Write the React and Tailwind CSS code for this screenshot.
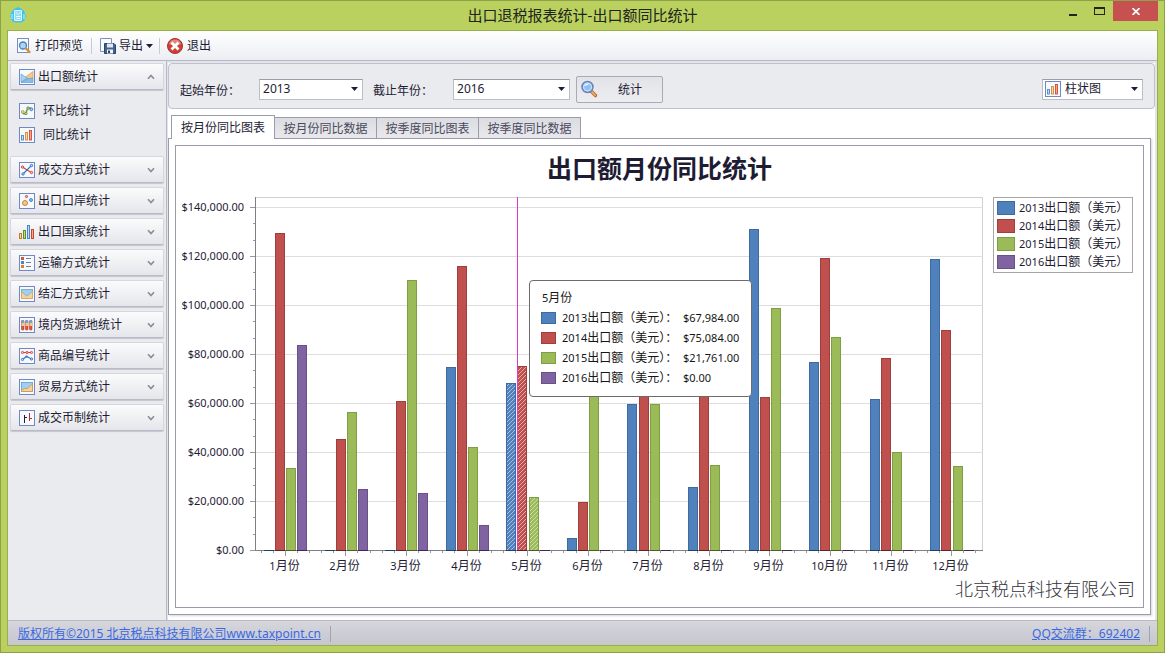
import React, { useState } from "react";

const SERIES = [
  { year: "2013", fill: "#4f81bd", edge: "#3f6a9e", tip: "$67,984.00" },
  { year: "2014", fill: "#c0504d", edge: "#9f3f3d", tip: "$75,084.00" },
  { year: "2015", fill: "#9bbb59", edge: "#7f9d43", tip: "$21,761.00" },
  { year: "2016", fill: "#8064a2", edge: "#695087", tip: "$0.00" },
];

const MONTHS = [
  [0, 129390, 33470, 83670],
  [0, 45310, 56330, 24900],
  [0, 60820, 110200, 23270],
  [74690, 115920, 42040, 10200],
  [67984, 75084, 21761, 0],
  [4900, 19600, 81600, 0],
  [59600, 73500, 59600, 0],
  [25710, 71400, 34690, 0],
  [131020, 62450, 98780, 0],
  [76730, 119180, 86940, 0],
  [61630, 78370, 40000, 0],
  [118780, 89800, 34290, 0],
];

const CHART = { w: 809, h: 380, left: 79, right: 807, base: 353 };
const UNIT = 49 / 20000;
const SLOT = 60.58;

function Glyph({ name, className = "" }) {
  return (
    <svg viewBox="0 0 16 16" className={`size-4 shrink-0 ${className}`} aria-hidden="true">
      {name !== "country" && name !== "page" && (
        <rect x="0.5" y="0.5" width="15" height="15" fill="#f6f9fe" stroke="#7088c4" />
      )}
      {name === "area" && (
        <>
          <path d="M2 5 L8 9 L14 7 V13.500 H2Z" fill="#a9d3f2" />
          <path d="M6.500 8 L14 2.500 V9 L9.500 9.500Z" fill="#f5c88b" stroke="#d99a4c" strokeWidth="0.7" />
          <path d="M2 5 L8 9 L2 13Z" fill="#a9d3f2" stroke="#5c9bd0" strokeWidth="0.6" />
          <path d="M2 13.500 L8 10 L14 9 V13.500Z" fill="#86bde6" stroke="#5c9bd0" strokeWidth="0.6" />
        </>
      )}
      {name === "wave" && (
        <>
          <path d="M3.500 9.500 C5 12 7 11 7.500 8.500 S10 3.500 12.500 6" fill="none" stroke="#6b9a3a" strokeWidth="1.500" />
          <circle cx="3.800" cy="9" r="1.400" fill="#f5e6a2" stroke="#a68a35" strokeWidth="0.8" />
          <circle cx="7" cy="10.500" r="1.200" fill="#cde39f" stroke="#5e8a30" strokeWidth="0.8" />
          <circle cx="9" cy="5" r="1.200" fill="#cde39f" stroke="#5e8a30" strokeWidth="0.8" />
          <circle cx="12.300" cy="6.300" r="1.400" fill="#b6d5f5" stroke="#3c6fae" strokeWidth="0.9" />
        </>
      )}
      {name === "bars" && (
        <>
          <rect x="2.500" y="8.500" width="2" height="4.500" fill="#b9dcf8" stroke="#4a8ccf" strokeWidth="0.9" />
          <rect x="6.500" y="5.500" width="2" height="7.500" fill="#fbd8a6" stroke="#cf8b3e" strokeWidth="0.9" />
          <rect x="10.500" y="3.500" width="2" height="9.500" fill="#f9a48c" stroke="#d04a34" strokeWidth="0.9" />
        </>
      )}
      {name === "deal" && (
        <>
          <path d="M3.500 5 L8 8 L12.500 10.500" stroke="#d6403a" strokeWidth="1.100" fill="none" />
          <path d="M4 12 L8 8 L12.500 3.500" stroke="#3373c0" strokeWidth="1.100" fill="none" />
          <circle cx="3.500" cy="5" r="1.200" fill="#fbb" stroke="#d6403a" strokeWidth="0.9" />
          <circle cx="12.500" cy="10.500" r="1.200" fill="#fbb" stroke="#d6403a" strokeWidth="0.9" />
          <circle cx="4" cy="12" r="1.200" fill="#bdf" stroke="#3373c0" strokeWidth="0.9" />
          <circle cx="12.500" cy="3.500" r="1.200" fill="#bdf" stroke="#3373c0" strokeWidth="0.9" />
        </>
      )}
      {name === "port" && (
        <>
          <circle cx="6" cy="10" r="2.500" fill="#f6c58a" stroke="#c47a28" strokeWidth="0.9" />
          <circle cx="12" cy="7" r="1.500" fill="#8cc2f0" stroke="#3c7cc0" strokeWidth="0.9" />
          <circle cx="7.500" cy="3.500" r="1.100" fill="#f5a79a" stroke="#cc3e30" strokeWidth="0.9" />
        </>
      )}
      {name === "country" && (
        <>
          <rect x="0.5" y="9.500" width="2" height="5" fill="#f9d6a8" stroke="#c47a28" />
          <rect x="4.500" y="6.500" width="2" height="8" fill="#c0dd8e" stroke="#5f8f25" />
          <rect x="8.500" y="1.500" width="2" height="13" fill="#b9dcfa" stroke="#4a86c8" />
          <rect x="12.500" y="5.500" width="2" height="9" fill="#f9a48c" stroke="#c9442f" />
        </>
      )}
      {name === "list" && (
        <>
          <rect x="2" y="2" width="3" height="3" fill="#d4553e" />
          <rect x="2" y="6" width="3" height="3" fill="#4a86d0" />
          <rect x="2" y="10" width="3" height="3" fill="#d9822e" />
          <path d="M7 3.500h5M7 7.500h5M7 11.500h5" stroke="#6a7fae" />
        </>
      )}
      {name === "settle" && (
        <>
          <rect x="2.500" y="3.500" width="11" height="9" fill="#f7d19c" stroke="#d8994a" strokeWidth="0.8" />
          <path d="M2.500 3.500 H13.500 V5 L10 8.500 L7.500 10 L2.500 5.500Z" fill="#9fd0ef" stroke="#5aa0d2" strokeWidth="0.6" />
        </>
      )}
      {name === "tubes" && (
        <>
          {[2.5, 6.5, 10.5].map((x) => (
            <g key={x}>
              <rect x={x} y="3.500" width="2.500" height="9.500" rx="0.8" fill="#e0563e" stroke="#b33a2a" strokeWidth="0.6" />
              <rect x={x} y="3.500" width="2.500" height="2.500" fill="#62aae0" />
              <rect x={x} y="6" width="2.500" height="3" fill="#f7c684" />
            </g>
          ))}
        </>
      )}
      {name === "code" && (
        <>
          <path d="M3 4.500H13" stroke="#d6403a" fill="none" />
          {[3.5, 8, 12.5].map((x) => (
            <circle key={x} cx={x} cy="4.500" r="1.100" fill="#fbb" stroke="#d6403a" strokeWidth="0.9" />
          ))}
          <path d="M3.500 11.500 L7.500 8.500 L12.500 11" stroke="#3373c0" strokeWidth="1.100" fill="none" />
          <circle cx="3.500" cy="11.500" r="1.100" fill="#bdf" stroke="#3373c0" strokeWidth="0.9" />
          <circle cx="7.500" cy="8.500" r="1.100" fill="#3373c0" />
          <circle cx="12.500" cy="11" r="1.100" fill="#bdf" stroke="#3373c0" strokeWidth="0.9" />
        </>
      )}
      {name === "trade" && (
        <>
          <rect x="2.500" y="3.500" width="11" height="9" fill="#9fd0ef" stroke="#5aa0d2" strokeWidth="0.8" />
          <path d="M2.500 11 L6 9.500 L8.500 9.500 L13.500 5 V12.500 H2.500Z" fill="#f7d19c" stroke="#d0903f" strokeWidth="0.7" />
        </>
      )}
      {name === "currency" && (
        <>
          <path d="M5.500 5v8M5.500 7.500h2.500" stroke="#20202c" />
          <path d="M10.500 3v8M10.500 8.500h2.500" stroke="#c22a30" />
        </>
      )}
      {name === "page" && (
        <>
          <rect x="1.500" y="0.5" width="11" height="14" fill="#f8fbff" stroke="#7d8cba" />
          <circle cx="7" cy="7.500" r="3.500" fill="#a9d5f8" stroke="#4a7fbe" strokeWidth="1.300" />
          <path d="M10 10.500 L13.500 14" stroke="#d98b3c" strokeWidth="2.400" strokeLinecap="round" />
        </>
      )}
    </svg>
  );
}

function Magnifier() {
  return (
    <svg viewBox="0 0 18 18" className="size-[18px] shrink-0" aria-hidden="true">
      <path d="M11 11 L15.500 15.500" stroke="#b8672a" strokeWidth="3.200" strokeLinecap="round" />
      <path d="M11.500 11.500 L15.200 15.200" stroke="#f5b568" strokeWidth="1.600" strokeLinecap="round" />
      <circle cx="7.500" cy="7" r="5.500" fill="#8fc0f2" stroke="#6a82b8" strokeWidth="1.500" />
      <circle cx="7.500" cy="7" r="4" fill="#8fc0f2" stroke="#d8ebfc" strokeWidth="0.9" />
      <path d="M5 6 Q6 4 8.500 4" stroke="#fff" fill="none" strokeWidth="1.100" />
    </svg>
  );
}

function SaveIcon() {
  return (
    <svg viewBox="0 0 16 16" className="size-4 shrink-0" aria-hidden="true">
      <path d="M0.5 0.5 H11.500 V13.500 H0.5Z" fill="#f8fbff" stroke="#8290bd" />
      <path d="M4.500 5.500 H14 L15.500 7 V15.500 H4.500Z" fill="#46618c" stroke="#2c4268" />
      <rect x="7" y="5.500" width="6" height="4" fill="#dde6f2" />
      <rect x="7" y="11.500" width="6" height="4" fill="#f1f4f9" />
      <rect x="8" y="12.500" width="2" height="2.500" fill="#2c4268" />
    </svg>
  );
}

function ExitIcon() {
  return (
    <svg viewBox="0 0 16 16" className="size-4 shrink-0" aria-hidden="true">
      <circle cx="8" cy="8" r="7.500" fill="#cf3f36" stroke="#a8302b" />
      <path d="M2 6 A6.300 6.300 0 0 1 14 6 Q8 9 2 6Z" fill="#e4857d" />
      <path d="M5.500 5.500 L10.500 10.500 M10.500 5.500 L5.500 10.500" stroke="#fff" strokeWidth="2.800" strokeLinecap="square" />
    </svg>
  );
}

function AppLogo() {
  return (
    <svg viewBox="0 0 16 16" className="size-4" aria-hidden="true">
      <path d="M5 1.500 L8 0 L11 1.500 L14 4 L16 9 L14 14 L11 15.500 H5 L2 14 L0 9 L2 4Z" fill="#3fc3ee" />
      <path d="M1 7h2v5H1zM13 7h2v5h-2z" fill="#7fdcf8" />
      <rect x="4.500" y="3.500" width="7" height="10" rx="0.5" fill="#8edcf5" stroke="#e4f7fd" />
      <path d="M6 6h1.500M9 6h1.500M7.500 7.500h1M6 9.500h4.500M6.500 11.500h3.500" stroke="#f4fcff" />
    </svg>
  );
}

function DownArrow({ className = "" }) {
  return (
    <svg viewBox="0 0 7 4" className={`h-1 w-[7px] shrink-0 ${className}`} aria-hidden="true">
      <path d="M0 0H7L3.500 4Z" fill="#1e1c33" />
    </svg>
  );
}

function Chevron({ up }) {
  return (
    <svg viewBox="0 0 8 6" className="h-1.5 w-2 shrink-0" aria-hidden="true">
      <path d={up ? "M1 4.800 L4 1.500 L7 4.800" : "M1 1.200 L4 4.500 L7 1.200"} fill="none" stroke="#8d8d99" strokeWidth="1.700" />
    </svg>
  );
}

function Picker({ id, label, options, value, onChange, className, icon }) {
  return (
    <div className={`relative flex h-[21px] items-center border border-[#bcbdc8] border-t-[#9c9dab] bg-white ${className}`}>
      {icon && <Glyph name={icon} className="ml-0.5" />}
      <select
        id={id}
        aria-label={label}
        value={value}
        onChange={(e) => onChange(e.target.value)}
        className={`h-full w-full appearance-none bg-transparent pr-5 outline-none ${icon ? "pl-1" : "pl-[3px]"}`}
      >
        {options.map((o) => (
          <option key={o}>{o}</option>
        ))}
      </select>
      <DownArrow className="pointer-events-none absolute top-[7px] right-1" />
    </div>
  );
}

const GROUPS = [
  ["deal", "成交方式统计"],
  ["port", "出口口岸统计"],
  ["country", "出口国家统计"],
  ["list", "运输方式统计"],
  ["settle", "结汇方式统计"],
  ["tubes", "境内货源地统计"],
  ["code", "商品编号统计"],
  ["trade", "贸易方式统计"],
  ["currency", "成交币制统计"],
];

function GroupButton({ icon, label, open }) {
  return (
    <button
      type="button"
      aria-expanded={!!open}
      className="flex h-[27px] w-full shrink-0 items-center rounded-xs border border-[#d6d7de] border-b-[#b9bac5] bg-linear-to-b from-[#fbfbfc] to-[#e5e6eb] pr-2 pl-2 shadow-[0_1px_1px_#c4c5ce]"
    >
      <Glyph name={icon} />
      <span className="ml-[3px] flex-1 text-left">{label}</span>
      <Chevron up={open} />
    </button>
  );
}

function Sidebar() {
  return (
    <nav className="flex w-[159px] shrink-0 flex-col gap-1 border-r border-[#b7b8c6] bg-[#eaebef] pt-0.5 pr-0.5 pl-0.5">
      <GroupButton icon="area" label="出口额统计" open />
      <div className="flex flex-col pt-[5px] pb-[5px]">
        {[["wave", "环比统计"], ["bars", "同比统计"]].map(([icon, label]) => (
          <a key={label} href="#" className="flex h-6 items-center gap-2 pl-[9px]">
            <Glyph name={icon} />
            {label}
          </a>
        ))}
      </div>
      {GROUPS.map(([icon, label]) => (
        <GroupButton key={label} icon={icon} label={label} />
      ))}
    </nav>
  );
}

function Plot() {
  const { w, h, left, right, base } = CHART;
  return (
    <svg viewBox={`0 0 ${w} ${h}`} className="block w-full" role="img" aria-label="出口额月份同比统计">
      <defs>
        <pattern id="hatch" width="4" height="4" patternUnits="userSpaceOnUse">
          <path d="M-1 1 L1 -1 M0 4 L4 0 M3 5 L5 3" stroke="#fff" strokeOpacity="0.5" strokeWidth="1" />
        </pattern>
      </defs>
      <path d={`M${left} 0.5H${right - 0.5}V${base}`} fill="none" stroke="#d0d0d4" />
      {[0, 1, 2, 3, 4, 5, 6, 7].map((k) => {
        const y = base - 49 * k + 0.5;
        return (
          <g key={k}>
            {k > 0 && <path d={`M${left} ${y}H${right}`} stroke="#dedee0" />}
            <path d={`M${left - 5} ${y}H${left}`} stroke="#9a9a9e" />
            {k < 7 && (
              <path d={`M${left - 2} ${y - 16}h2M${left - 2} ${y - 33}h2`} stroke="#9a9a9e" />
            )}
            <text x="68" y={Math.floor(y) + 4} textAnchor="end" className="fill-[#1e1c33] text-[11px]">
              {"$" + (k * 20000).toLocaleString("en-US") + ".00"}
            </text>
          </g>
        );
      })}
      {MONTHS.map((vals, m) => {
        const cx = left + SLOT * (m + 0.5);
        return (
          <g key={m}>
            {vals.map((v, i) => {
              const x = Math.round(cx - 21.3 + i * 11.1);
              const top = Math.round(base - v * UNIT);
              if (v === 0) return null;
              return (
                <g key={i}>
                  <rect x={x + 0.5} y={top + 0.5} width="9" height={base - top} fill={SERIES[i].fill} stroke={SERIES[i].edge} />
                  {m === 4 && <rect x={x + 1} y={top + 1} width="8" height={base - top - 1} fill="url(#hatch)" />}
                </g>
              );
            })}
            {[-2, -1, 0, 1, 2].map((t) => (
              <path
                key={t}
                d={`M${Math.floor(cx + t * 12.12) + 0.5} ${base + 1}v${t === 0 ? 5 : 2}`}
                stroke="#9a9a9e"
              />
            ))}
            <text x={Math.floor(cx) - 0.5} y="373" textAnchor="middle" className="fill-[#1e1c33] text-[12px]">
              <tspan className="text-[11px]">{m + 1}</tspan>月份
            </text>
          </g>
        );
      })}
      <path d={`M${left + 0.5} 0V${base}M${left} ${base + 0.5}H${right}`} stroke="#7f7f84" />
      {MONTHS.map((vals, m) =>
        vals.map((v, i) => {
          const x = Math.round(left + SLOT * (m + 0.5) - 21.3 + i * 11.1);
          return (
            <path
              key={`${m}-${i}`}
              d={`M${x} ${base + 0.5}h10`}
              stroke={["#1f3f63", "#5e2423", "#4a5d24", "#3a2a50"][i]}
            />
          );
        })
      )}
      <path d={`M341.500 0V${base}`} stroke="#d63cc6" />
    </svg>
  );
}

function SeriesName({ year }) {
  return (
    <>
      <span className="text-[11px]">{year}</span>出口额（美元）
    </>
  );
}

const SWATCH = [
  "bg-[#4f81bd] border-[#3f6a9e]",
  "bg-[#c0504d] border-[#9f3f3d]",
  "bg-[#9bbb59] border-[#7f9d43]",
  "bg-[#8064a2] border-[#695087]",
];

function ChartTooltip() {
  return (
    <div
      role="tooltip"
      style={{ left: `${(353 / CHART.w) * 100}%`, top: `${(83 / CHART.h) * 100}%` }}
      className="absolute w-[223px] rounded-sm border border-[#6b6b6e] bg-white px-[11px] pt-[7px] pb-2 whitespace-nowrap text-[#161616]"
    >
      <div className="h-5 pl-px leading-5">
        <span className="text-[11px]">5</span>月份
      </div>
      {SERIES.map((s, i) => (
        <div key={s.year} className="flex h-5 items-center leading-5">
          <span className={`mr-1.5 h-3 w-[15px] border ${SWATCH[i]}`} />
          <span className="w-[121px]">
            <SeriesName year={s.year} />：
          </span>
          <span className="text-[11px]">{s.tip}</span>
        </div>
      ))}
    </div>
  );
}

function Legend() {
  return (
    <ul className="w-[140px] shrink-0 self-start border border-[#a5a5aa] px-[3px] py-px whitespace-nowrap">
      {SERIES.map((s, i) => (
        <li key={s.year} className="flex h-[18px] items-center gap-1 leading-[18px]">
          <span className={`h-3.5 w-[18px] border ${SWATCH[i]}`} />
          <span>
            <SeriesName year={s.year} />
          </span>
        </li>
      ))}
    </ul>
  );
}

const TABS = ["按月份同比图表", "按月份同比数据", "按季度同比图表", "按季度同比数据"];

export default function App() {
  const [from, setFrom] = useState("2013");
  const [to, setTo] = useState("2016");
  const [kind, setKind] = useState("柱状图");
  const years = ["2013", "2014", "2015", "2016"];

  return (
    <div className="flex min-h-screen flex-col border border-[#8fa04a] bg-[#bad160] px-1.5 pb-1.5 font-['Noto_Sans','Noto_Sans_CJK_SC',sans-serif] text-[12px] leading-4 text-[#1e1c33]">
      <header className="relative flex h-[29px] shrink-0 items-center justify-center">
        <span className="absolute top-1.5 left-[3px]">
          <AppLogo />
        </span>
        <h1 className="pb-0.5 text-[15px] leading-5 text-[#20241a]">出口退税报表统计-出口额同比统计</h1>
        <div className="absolute top-0 right-0 flex h-5">
          <button type="button" aria-label="最小化" className="flex w-[27px] items-center justify-center">
            <span className="mt-2 h-0.5 w-2 bg-[#22251c]" />
          </button>
          <button type="button" aria-label="最大化" className="flex w-[27px] items-center justify-center">
            <span className="h-2 w-[11px] border border-t-2 border-[#22251c]" />
          </button>
          <button type="button" aria-label="关闭" className="flex w-[45px] items-center justify-center bg-[#c75050]">
            <svg viewBox="0 0 8 7" className="h-[7px] w-2" aria-hidden="true">
              <path d="M0.5 0 L7.500 7 M7.500 0 L0.5 7" stroke="#fff" strokeWidth="1.700" />
            </svg>
          </button>
        </div>
      </header>

      <div className="flex flex-1 flex-col border border-[#9aae4d] bg-[#e3e4ea]">
        <div className="flex h-[30px] shrink-0 items-center border-b border-[#b5b7c4] bg-linear-to-b from-white to-[#eceef3] pl-2">
          <button type="button" className="flex items-center gap-[3px]">
            <Glyph name="page" />
            打印预览
          </button>
          <span className="mx-2 h-4 w-px bg-[#c9cad3]" />
          <button type="button" className="flex items-center gap-[3px]">
            <SaveIcon />
            导出
            <DownArrow />
          </button>
          <span className="mr-[7px] ml-1.5 h-4 w-px bg-[#c9cad3]" />
          <button type="button" className="flex items-center gap-1">
            <ExitIcon />
            退出
          </button>
        </div>

        <div className="flex flex-1 gap-px pr-0.5">
          <Sidebar />
          <main className="mt-0.5 flex min-w-0 flex-1 flex-col bg-white">
            <form
              onSubmit={(e) => e.preventDefault()}
              className="flex h-[46px] shrink-0 items-center rounded-sm border border-[#bfc1cc] bg-[#eaebef] pt-1.5 pr-[11px] pl-[11px]"
            >
              <label htmlFor="from" className="pt-1">起始年份：</label>
              <Picker id="from" options={years} value={from} onChange={setFrom} className="ml-[19px] w-[104px]" />
              <label htmlFor="to" className="ml-2.5 pt-1">截止年份：</label>
              <Picker id="to" options={years} value={to} onChange={setTo} className="ml-5 w-[117px]" />
              <button
                type="submit"
                className="ml-1.5 flex h-[27px] w-[87px] items-center rounded-xs border border-[#a9aab6] bg-linear-to-b from-[#e2e3e8] to-[#ededf1] pl-[3px]"
              >
                <Magnifier />
                <span className="flex-1 pt-0.5 text-center">统计</span>
              </button>
              <Picker
                id="kind"
                label="图表类型"
                options={["柱状图", "折线图"]}
                value={kind}
                onChange={setKind}
                icon="bars"
                className="ml-auto w-[101px]"
              />
            </form>

            <div className="mr-1 mb-[5px] flex flex-1 flex-col pt-1.5">
              <div role="tablist" className="flex items-end pl-[3px]">
                {TABS.map((t, i) => (
                  <button
                    key={t}
                    type="button"
                    role="tab"
                    aria-selected={i === 0}
                    className={
                      i === 0
                        ? "relative -mb-px h-6 w-[104px] border border-b-0 border-[#9c9bab] bg-white"
                        : "h-[21px] w-[102px] border border-b-0 border-l-0 border-[#9c9bab] bg-linear-to-b from-[#dbdce1] to-[#e9e9ed] pt-0.5 text-[#4a495c]"
                    }
                  >
                    {t}
                  </button>
                ))}
              </div>
              <section className="flex flex-1 flex-col border border-[#9c9bab] p-1.5 shadow-[1px_1px_2px_#d5d5dc]">
                <div className="flex flex-1 flex-col border border-[#9c9bab]">
                  <h2 className="h-[51px] text-center text-[25px] leading-[44px] font-bold">出口额月份同比统计</h2>
                  <div className="flex gap-2 pr-2.5">
                    <div className="relative min-w-0 flex-1">
                      <Plot />
                      <ChartTooltip />
                    </div>
                    <Legend />
                  </div>
                  <p className="pr-2 text-right text-[18px] leading-6 font-light text-[#33333c]">北京税点科技有限公司</p>
                </div>
              </section>
            </div>
          </main>
        </div>

        <footer className="flex h-[25px] shrink-0 items-center justify-between border-t border-[#b9bac6] bg-linear-to-b from-[#d6d7dd] to-[#c5c6ce] pt-0.5 pr-[7px] pl-2.5 text-[#3b68e0]">
          <div className="flex items-center gap-[9px]">
            <a href="#" className="underline">版权所有©2015 北京税点科技有限公司www.taxpoint.cn</a>
            <span className="h-4 w-px bg-[#a2a3ae]" />
          </div>
          <div className="flex items-center gap-[9px]">
            <a href="#" className="underline">QQ交流群：692402</a>
            <span className="h-4 w-px bg-[#a2a3ae]" />
          </div>
        </footer>
      </div>
    </div>
  );
}
